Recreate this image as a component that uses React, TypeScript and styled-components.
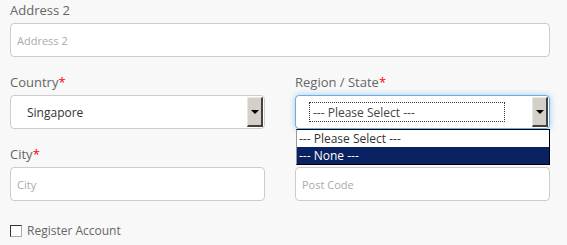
import styled, { createGlobalStyle } from "styled-components";

const Global = createGlobalStyle`
  html, body {
    margin: 0;
    background: #f8f8f8;
  }
  body {
    font-family: "Open Sans", "Liberation Sans", sans-serif;
  }
`;

function App() {
  return (
    <>
      <Global />
      <Form>
        <Group>
          <Label>Address 2</Label>
          <Input placeholder="Address 2" />
        </Group>
        <Row>
          <Group>
            <Label>
              Country<Req>*</Req>
            </Label>
            <SelectBox>
              <SelectText>Singapore</SelectText>
              <ArrowButton>
                <Arrow />
              </ArrowButton>
            </SelectBox>
          </Group>
          <Group>
            <Label>
              Region / State<Req>*</Req>
            </Label>
            <SelectWrap>
              <SelectBox focused>
                <FocusText>--- Please Select ---</FocusText>
                <ArrowButton>
                  <Arrow />
                </ArrowButton>
              </SelectBox>
              <Popup>
                <Option>--- Please Select ---</Option>
                <Option selected>--- None ---</Option>
              </Popup>
            </SelectWrap>
          </Group>
        </Row>
        <Row>
          <Group>
            <Label>
              City<Req>*</Req>
            </Label>
            <Input placeholder="City" />
          </Group>
          <Group>
            <Label>&nbsp;</Label>
            <Input placeholder="Post Code" />
          </Group>
        </Row>
        <CheckRow>
          <Box />
          <CheckLabel>Register Account</CheckLabel>
        </CheckRow>
      </Form>
    </>
  );
}

export default App;

const Form = styled.div`
  width: 540px;
  padding: 0 10px;
`;

const Row = styled.div`
  display: grid;
  grid-template-columns: 255px 255px;
  column-gap: 30px;
`;

const Group = styled.div`
  display: flex;
  flex-direction: column;
  margin-bottom: 15px;
`;

const Label = styled.div`
  font-size: 13px;
  line-height: 20px;
  color: #666;
  margin-bottom: 3px;
`;

const Req = styled.span`
  color: #f00;
`;

const Input = styled.input`
  box-sizing: border-box;
  height: 34px;
  width: 100%;
  margin: 0;
  padding: 0 6px;
  border: 1px solid #ccc;
  border-radius: 4px;
  background: #fff;
  font-family: "Open Sans", "Liberation Sans", sans-serif;
  font-size: 11px;
  color: #555;
  outline: none;
  &::placeholder {
    color: #aaa;
  }
`;

const SelectWrap = styled.div`
  position: relative;
`;

const SelectBox = styled.div<{ focused?: boolean }>`
  box-sizing: border-box;
  height: 34px;
  display: flex;
  align-items: stretch;
  background: #fff;
  border: 1px solid ${(p) => (p.focused ? "#66afe9" : "#ccc")};
  border-radius: 4px;
  box-shadow: ${(p) =>
    p.focused ? "0 0 6px rgba(102, 175, 233, 0.6)" : "none"};
  padding: 1px 1px 1px 0;
`;

const SelectText = styled.div`
  flex: 1;
  display: flex;
  align-items: center;
  padding-left: 16px;
  font-size: 12px;
  color: #333;
`;

const FocusText = styled.div`
  flex: 1;
  display: flex;
  align-items: center;
  margin: 5px 27px 5px 13px;
  padding-left: 3px;
  border: 1px dotted #333;
  font-size: 12px;
  color: #444;
`;

const ArrowButton = styled.div`
  box-sizing: border-box;
  width: 16px;
  display: flex;
  align-items: center;
  justify-content: center;
  background: #d4d0c8;
  border-top: 1px solid #e8e6e0;
  border-left: 1px solid #e8e6e0;
  border-right: 2px solid #404040;
  border-bottom: 2px solid #404040;
`;

const Arrow = styled.div`
  width: 0;
  height: 0;
  border-left: 4px solid transparent;
  border-right: 4px solid transparent;
  border-top: 4px solid #000;
`;

const Popup = styled.div`
  position: absolute;
  left: 1px;
  right: 0;
  top: 34px;
  background: #fff;
  border: 1px solid #000;
  border-left-color: #999;
  z-index: 2;
`;

const Option = styled.div<{ selected?: boolean }>`
  height: 17px;
  line-height: 17px;
  padding-left: 2px;
  font-size: 12px;
  color: ${(p) => (p.selected ? "#fff" : "#333")};
  background: ${(p) => (p.selected ? "#0a2261" : "transparent")};
`;

const CheckRow = styled.div`
  display: flex;
  align-items: center;
  gap: 5px;
  margin-top: 6px;
`;

const Box = styled.div`
  box-sizing: border-box;
  width: 12px;
  height: 12px;
  background: #fff;
  border: 1px solid #333;
  border-right-color: #aaa;
  border-bottom-color: #aaa;
`;

const CheckLabel = styled.div`
  font-size: 12px;
  color: #666;
`;
